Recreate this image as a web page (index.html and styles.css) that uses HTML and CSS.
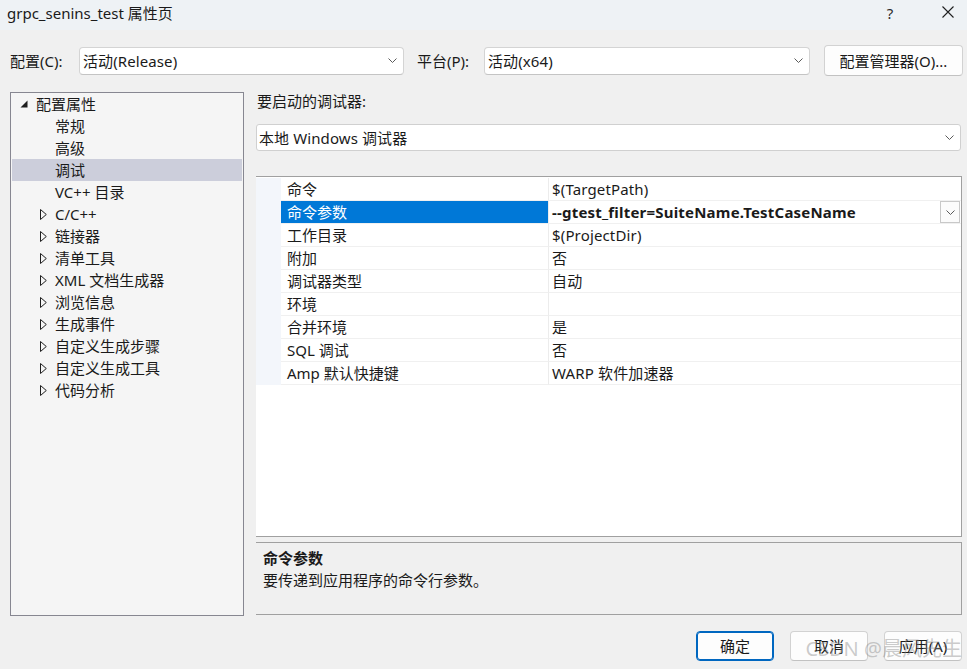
FILE: index.html
```html
<!DOCTYPE html>
<html lang="zh-CN">
<head>
<meta charset="utf-8">
<title>grpc_senins_test 属性页</title>
<link rel="stylesheet" href="styles.css">
</head>
<body>
<div class="window">
  <div class="titlebar">
    <div class="title">grpc_senins_test 属性页</div>
    <div class="help">?</div>
    <div class="close">
      <svg width="12" height="12" viewBox="0 0 12 12"><path d="M0.5 0.5 L11.5 11.5 M11.5 0.5 L0.5 11.5" stroke="#1f1f1f" stroke-width="1.1" fill="none"/></svg>
    </div>
  </div>

  <div class="config">
    <span class="lbl lbl-config">配置(C):</span>
    <div class="combo combo-config">
      <span class="combo-text">活动(Release)</span>
      <svg class="chev" width="9" height="5" viewBox="0 0 9 5"><path d="M0.5 0.5 L4.5 4.5 L8.5 0.5" fill="none" stroke="#5a5a5a" stroke-width="1"/></svg>
    </div>
    <span class="lbl lbl-platform">平台(P):</span>
    <div class="combo combo-platform">
      <span class="combo-text">活动(x64)</span>
      <svg class="chev" width="9" height="5" viewBox="0 0 9 5"><path d="M0.5 0.5 L4.5 4.5 L8.5 0.5" fill="none" stroke="#5a5a5a" stroke-width="1"/></svg>
    </div>
    <button class="btn btn-manager">配置管理器(O)...</button>
  </div>

  <div class="main">
    <div class="tree">
      <div class="node lvl0">
        <span class="twisty"><svg width="8" height="8" viewBox="0 0 8 8"><path d="M7.5 0.5 L7.5 7.5 L0.5 7.5 Z" fill="#1e1e1e"/></svg></span>
        <span>配置属性</span>
      </div>
      <div class="node lvl1"><span class="twisty"></span><span>常规</span></div>
      <div class="node lvl1"><span class="twisty"></span><span>高级</span></div>
      <div class="node lvl1 selected"><span class="twisty"></span><span>调试</span></div>
      <div class="node lvl1"><span class="twisty"></span><span>VC++ 目录</span></div>
      <div class="node lvl1"><span class="twisty"><svg class="tri" width="7" height="11" viewBox="0 0 7 11"><path d="M0.5 0.5 L6.3 5.5 L0.5 10.5 Z" fill="none" stroke="#1e1e1e" stroke-width="1"/></svg></span><span>C/C++</span></div>
      <div class="node lvl1"><span class="twisty"><svg class="tri" width="7" height="11" viewBox="0 0 7 11"><path d="M0.5 0.5 L6.3 5.5 L0.5 10.5 Z" fill="none" stroke="#1e1e1e" stroke-width="1"/></svg></span><span>链接器</span></div>
      <div class="node lvl1"><span class="twisty"><svg class="tri" width="7" height="11" viewBox="0 0 7 11"><path d="M0.5 0.5 L6.3 5.5 L0.5 10.5 Z" fill="none" stroke="#1e1e1e" stroke-width="1"/></svg></span><span>清单工具</span></div>
      <div class="node lvl1"><span class="twisty"><svg class="tri" width="7" height="11" viewBox="0 0 7 11"><path d="M0.5 0.5 L6.3 5.5 L0.5 10.5 Z" fill="none" stroke="#1e1e1e" stroke-width="1"/></svg></span><span>XML 文档生成器</span></div>
      <div class="node lvl1"><span class="twisty"><svg class="tri" width="7" height="11" viewBox="0 0 7 11"><path d="M0.5 0.5 L6.3 5.5 L0.5 10.5 Z" fill="none" stroke="#1e1e1e" stroke-width="1"/></svg></span><span>浏览信息</span></div>
      <div class="node lvl1"><span class="twisty"><svg class="tri" width="7" height="11" viewBox="0 0 7 11"><path d="M0.5 0.5 L6.3 5.5 L0.5 10.5 Z" fill="none" stroke="#1e1e1e" stroke-width="1"/></svg></span><span>生成事件</span></div>
      <div class="node lvl1"><span class="twisty"><svg class="tri" width="7" height="11" viewBox="0 0 7 11"><path d="M0.5 0.5 L6.3 5.5 L0.5 10.5 Z" fill="none" stroke="#1e1e1e" stroke-width="1"/></svg></span><span>自定义生成步骤</span></div>
      <div class="node lvl1"><span class="twisty"><svg class="tri" width="7" height="11" viewBox="0 0 7 11"><path d="M0.5 0.5 L6.3 5.5 L0.5 10.5 Z" fill="none" stroke="#1e1e1e" stroke-width="1"/></svg></span><span>自定义生成工具</span></div>
      <div class="node lvl1"><span class="twisty"><svg class="tri" width="7" height="11" viewBox="0 0 7 11"><path d="M0.5 0.5 L6.3 5.5 L0.5 10.5 Z" fill="none" stroke="#1e1e1e" stroke-width="1"/></svg></span><span>代码分析</span></div>
    </div>

    <div class="right">
      <div class="dbg-label">要启动的调试器:</div>
      <div class="combo combo-dbg">
        <span class="combo-text">本地 Windows 调试器</span>
        <svg class="chev" width="9" height="5" viewBox="0 0 9 5"><path d="M0.5 0.5 L4.5 4.5 L8.5 0.5" fill="none" stroke="#5a5a5a" stroke-width="1"/></svg>
      </div>

      <div class="grid">
        <div class="row"><div class="gutter"></div><div class="name">命令</div><div class="value">$(TargetPath)</div></div>
        <div class="row active"><div class="gutter"></div><div class="name">命令参数</div><div class="value"><span class="bold">--gtest_filter=SuiteName.TestCaseName</span><span class="val-drop"><svg width="9" height="5" viewBox="0 0 9 5"><path d="M0.5 0.5 L4.5 4.5 L8.5 0.5" fill="none" stroke="#5a5a5a" stroke-width="1"/></svg></span></div></div>
        <div class="row"><div class="gutter"></div><div class="name">工作目录</div><div class="value">$(ProjectDir)</div></div>
        <div class="row"><div class="gutter"></div><div class="name">附加</div><div class="value">否</div></div>
        <div class="row"><div class="gutter"></div><div class="name">调试器类型</div><div class="value">自动</div></div>
        <div class="row"><div class="gutter"></div><div class="name">环境</div><div class="value"></div></div>
        <div class="row"><div class="gutter"></div><div class="name">合并环境</div><div class="value">是</div></div>
        <div class="row"><div class="gutter"></div><div class="name">SQL 调试</div><div class="value">否</div></div>
        <div class="row"><div class="gutter"></div><div class="name">Amp 默认快捷键</div><div class="value">WARP 软件加速器</div></div>
      </div>

      <div class="desc">
        <div class="desc-title">命令参数</div>
        <div class="desc-text">要传递到应用程序的命令行参数。</div>
      </div>
    </div>
  </div>

  <div class="buttons">
    <button class="btn btn-dlg btn-default">确定</button>
    <button class="btn btn-dlg">取消</button>
    <button class="btn btn-dlg">应用(A)</button>
  </div>

  <div class="watermark">CSDN @晨风先生</div>
</div>
</body>
</html>
```

FILE: styles.css
```css
* { box-sizing: border-box; }

html, body {
  margin: 0;
  padding: 0;
}

body {
  width: 967px;
  height: 669px;
  overflow: hidden;
  background: #f0f0f0;
  font-family: "Noto Sans", "Noto Sans CJK SC", sans-serif;
  font-size: 15px;
  color: #1a1a1a;
}

.window {
  position: relative;
  width: 967px;
  height: 669px;
}

/* title bar */
.titlebar {
  height: 30px;
  background: #eef2f5;
  display: flex;
  align-items: center;
  padding-left: 7px;
}
.title {
  flex: 1;
  line-height: 20px;
  margin-top: -4px;
}
.help {
  width: 20px;
  margin-right: 42px;
  line-height: 20px;
  margin-top: -4px;
  text-align: center;
  color: #2a2a2a;
}
.close {
  width: 12px;
  height: 12px;
  margin-right: 13px;
  margin-top: -6px;
  display: flex;
}

/* config row */
.config {
  display: flex;
  align-items: center;
  height: 31px;
  margin-top: 15px;
  padding-left: 10px;
}
.lbl {
  line-height: 20px;
}
.lbl-config { width: 69px; }
.lbl-platform { width: 67px; margin-left: 13px; }

.combo {
  height: 28px;
  background: #ffffff;
  border: 1px solid #d4d4d4;
  border-bottom-color: #c4c4c4;
  border-radius: 4px;
  display: flex;
  align-items: center;
  padding: 0 6px 0 3px;
}
.combo-text {
  flex: 1;
  line-height: 20px;
  letter-spacing: 0.1px;
}
.chev { flex: none; }
.combo-config { width: 325px; }
.combo-platform { width: 326px; }

.btn {
  font-family: inherit;
  font-size: 15px;
  color: #1a1a1a;
  background: #fdfdfd;
  border: 1px solid #d2d2d2;
  border-bottom-color: #c2c2c2;
  border-radius: 4px;
  padding: 0;
  line-height: 20px;
}
.btn-manager {
  width: 139px;
  height: 31px;
  margin-left: 14px;
}

/* main */
.main {
  display: flex;
  margin-top: 16px;
  padding-left: 10px;
  height: 524px;
}

.tree {
  width: 234px;
  height: 524px;
  background: #f5f5f5;
  border: 1px solid #878791;
  padding: 0 1px;
}
.node {
  height: 22px;
  display: flex;
  align-items: center;
  line-height: 22px;
  white-space: nowrap;
}
.node.lvl0 { padding-left: 8px; }
.node.lvl1 { padding-left: 27px; }
.twisty {
  width: 16px;
  height: 22px;
  flex: none;
  display: flex;
  align-items: center;
}
.lvl0 .twisty svg { margin-top: 0; }
.lvl1 .twisty { width: 16px; padding-left: 1px; }
.tri { margin-top: 1px; }
.node.selected { background: #cccedb; }

.right {
  margin-left: 12px;
  width: 706px;
  display: flex;
  flex-direction: column;
}
.dbg-label {
  height: 32px;
  line-height: 18px;
  padding-left: 1px;
}
.combo-dbg {
  width: 705px;
  height: 27px;
  border-radius: 3px;
  border-color: #d0d0d0;
  padding-left: 2px;
}

/* property grid */
.grid {
  margin-top: 25px;
  height: 361px;
  padding-top: 1px;
  background: #ffffff;
  border-top: 1px solid #a0a0a0;
  border-right: 1px solid #a0a0a0;
  border-bottom: 1px solid #a0a0a0;
}
.row {
  display: grid;
  grid-template-columns: 25px 267px 1fr;
  height: 23px;
}
.gutter {
  background: #f3f6fb;
}
.name {
  padding-left: 6px;
  line-height: 22px;
  border-bottom: 1px solid #f0f0f0;
  white-space: nowrap;
}
.value {
  display: flex;
  align-items: center;
  padding-left: 3px;
  line-height: 22px;
  border-left: 1px solid #ececec;
  border-bottom: 1px solid #f0f0f0;
  white-space: nowrap;
  letter-spacing: 0.15px;
}
.row.active .name {
  background: #0078d7;
  color: #ffffff;
}
.bold {
  font-weight: 700;
  flex: 1;
  letter-spacing: 0.2px;
}
.val-drop {
  width: 20px;
  height: 22px;
  margin-right: 1px;
  border: 1px solid #c8c8c8;
  background: #fbfbfb;
  display: flex;
  align-items: center;
  justify-content: center;
}

/* description */
.desc {
  margin-top: 5px;
  height: 73px;
  border-top: 1px solid #a0a0a0;
  border-right: 1px solid #a0a0a0;
  border-bottom: 1px solid #a0a0a0;
  padding: 4px 0 0 7px;
}
.desc-title {
  font-weight: 700;
  line-height: 22px;
}
.desc-text {
  line-height: 22px;
}

/* dialog buttons */
.buttons {
  display: flex;
  justify-content: flex-end;
  gap: 16px;
  margin-top: 15px;
  padding-right: 5px;
}
.btn-dlg {
  width: 78px;
  height: 30px;
}
.btn-default {
  border: 1px solid #0067c0;
  box-shadow: inset 0 0 0 1px #0067c0;
}

.watermark {
  position: absolute;
  right: 5px;
  bottom: 8px;
  font-size: 20px;
  line-height: 24px;
  color: rgba(140, 140, 140, 0.45);
  white-space: nowrap;
  pointer-events: none;
}
```
